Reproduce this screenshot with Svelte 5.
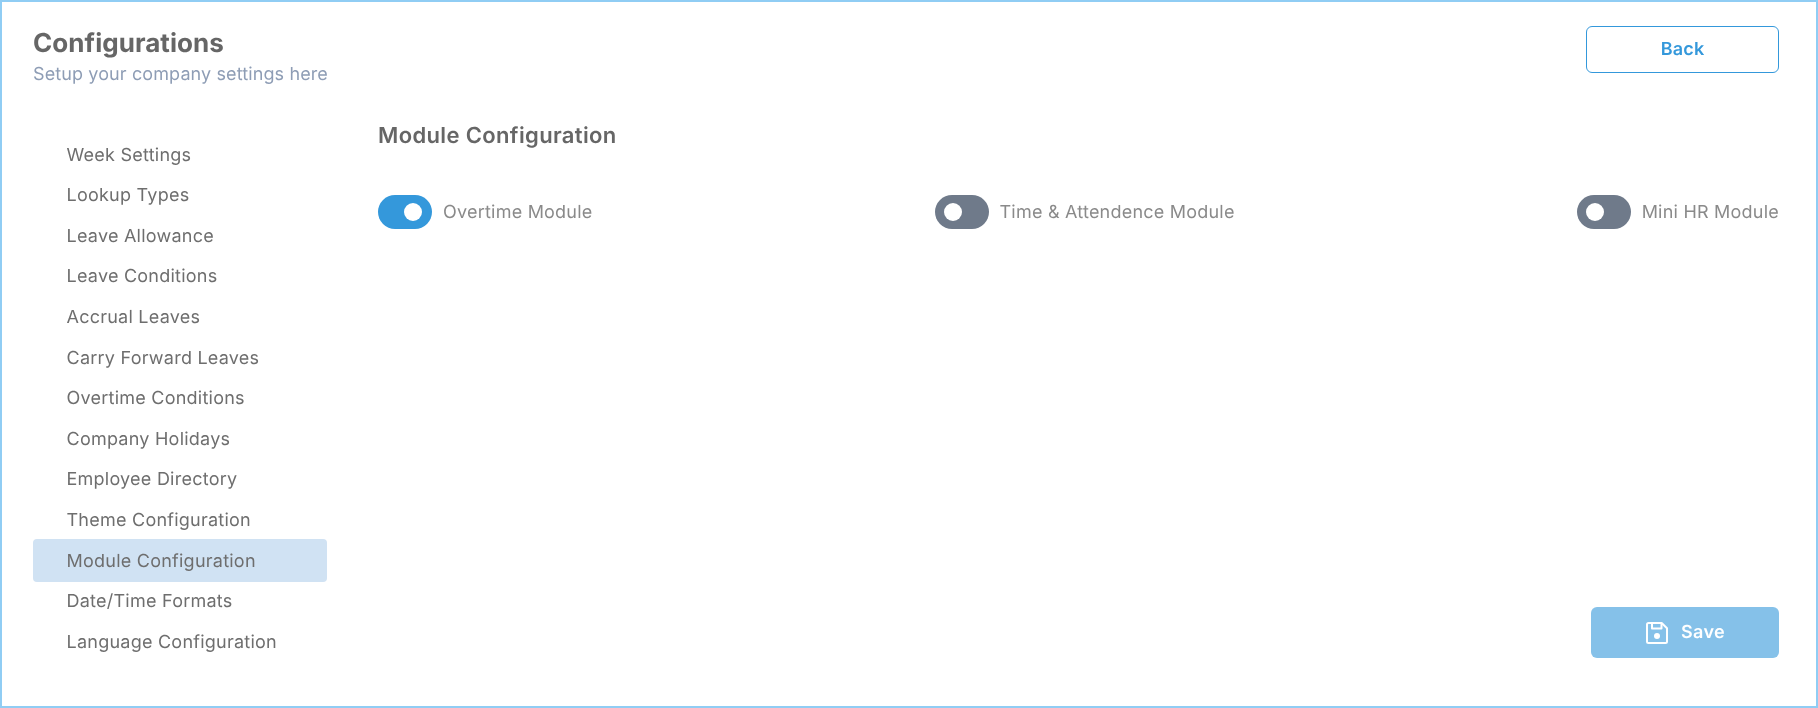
<script>
	const items = [
		"Week Settings",
		"Lookup Types",
		"Leave Allowance",
		"Leave Conditions",
		"Accrual Leaves",
		"Carry Forward Leaves",
		"Overtime Conditions",
		"Company Holidays",
		"Employee Directory",
		"Theme Configuration",
		"Module Configuration",
		"Date/Time Formats",
		"Language Configuration"
	];

	let active = "Module Configuration";

	let modules = [
		{ name: "Overtime Module", on: true },
		{ name: "Time & Attendence Module", on: false },
		{ name: "Mini HR Module", on: false }
	];
</script>

<div class="page">
	<header>
		<div>
			<h1>Configurations</h1>
			<p>Setup your company settings here</p>
		</div>
		<button class="back">Back</button>
	</header>

	<div class="body">
		<nav>
			{#each items as item}
				<a href="#top" class:active={item === active} on:click|preventDefault={() => (active = item)}>{item}</a>
			{/each}
		</nav>

		<main>
			<h2>Module Configuration</h2>
			<div class="modules">
				{#each modules as m}
					<label class="module">
						<input type="checkbox" bind:checked={m.on} />
						<span class="track"><span class="knob"></span></span>
						<span class="name">{m.name}</span>
					</label>
				{/each}
			</div>
			<div class="actions">
				<button class="save">
					<svg width="24" height="24" viewBox="0 0 24 24" fill="none" stroke="currentColor" stroke-width="2" stroke-linejoin="round">
						<path d="M2 3.500a1.500 1.500 0 0 1 1.500-1.500h13.200L22 7.300v13.200a1.500 1.500 0 0 1-1.500 1.500h-17A1.500 1.500 0 0 1 2 20.500z" />
						<path d="M7 2v5.500h9.500V2" />
						<circle cx="12" cy="15" r="3" fill="currentColor" stroke="none" />
					</svg>
					Save
				</button>
			</div>
		</main>
	</div>
</div>

<style>
	:global(body) {
		margin: 0;
		background: #fff;
	}

	.page {
		box-sizing: border-box;
		height: 708px;
		border: 2px solid #90cdf4;
		padding: 24px 37px 0 31px;
		font-family: Inter, "Liberation Sans", sans-serif;
		font-optical-sizing: none;
		text-rendering: geometricPrecision;
		will-change: transform;
		display: flex;
		flex-direction: column;
	}

	header {
		display: flex;
		justify-content: space-between;
		align-items: flex-start;
	}

	h1 {
		margin: 0;
		font-size: 26px;
		line-height: 36px;
		font-weight: 650;
		letter-spacing: 0.05px;
		color: #666;
	}

	header p {
		margin: 2px 0 0;
		font-size: 18px;
		line-height: 22px;
		letter-spacing: 0.11px;
		color: #8e9db5;
	}

	.back {
		width: 193px;
		height: 47px;
		background: #fff;
		border: 1px solid #3498db;
		border-radius: 6px;
		color: #3498db;
		font: 600 18px Inter, sans-serif;
		letter-spacing: 0.2px;
		text-rendering: geometricPrecision;
		cursor: pointer;
	}

	.body {
		display: flex;
		flex: 1;
		gap: 51px;
		margin-top: 34px;
	}

	nav {
		width: 294px;
		flex: none;
		display: flex;
		flex-direction: column;
		padding-top: 13px;
	}

	nav a {
		box-sizing: border-box;
		height: 43px;
		margin-bottom: -2.4px;
		padding: 1px 0 0 33.5px;
		display: flex;
		align-items: center;
		border-radius: 4px;
		font-size: 18px;
		letter-spacing: 0.24px;
		color: #6e6e6e;
		text-decoration: none;
	}

	nav a.active {
		background: #d0e2f3;
	}

	main {
		flex: 1;
		display: flex;
		flex-direction: column;
		min-width: 0;
		padding-top: 1px;
	}

	h2 {
		margin: 0;
		font-size: 22px;
		line-height: 30px;
		font-weight: 630;
		letter-spacing: 0.36px;
		color: #666;
	}

	.modules {
		display: flex;
		justify-content: space-between;
		margin-top: 44px;
	}

	.module {
		display: flex;
		align-items: center;
		gap: 11px;
		cursor: pointer;
	}

	.module input {
		display: none;
	}

	.track {
		width: 54px;
		height: 34px;
		border-radius: 17px;
		background: #6f7a8a;
		display: flex;
		align-items: center;
		padding: 0 10px 0 9px;
		box-sizing: border-box;
	}

	input:checked + .track {
		background: #3498db;
		justify-content: flex-end;
	}

	.knob {
		width: 18px;
		height: 18px;
		border-radius: 50%;
		background: #fff;
	}

	.name {
		font-size: 18px;
		letter-spacing: 0.22px;
		color: #8a8a8a;
	}

	.actions {
		margin-top: auto;
		margin-bottom: 48px;
		display: flex;
		justify-content: flex-end;
	}

	.save {
		width: 188px;
		height: 51px;
		display: flex;
		align-items: center;
		justify-content: center;
		gap: 12px;
		background: #85c1e9;
		border: none;
		border-radius: 6px;
		color: #fff;
		font: 600 18px Inter, sans-serif;
		letter-spacing: 0.3px;
		text-rendering: geometricPrecision;
		cursor: pointer;
	}
</style>
